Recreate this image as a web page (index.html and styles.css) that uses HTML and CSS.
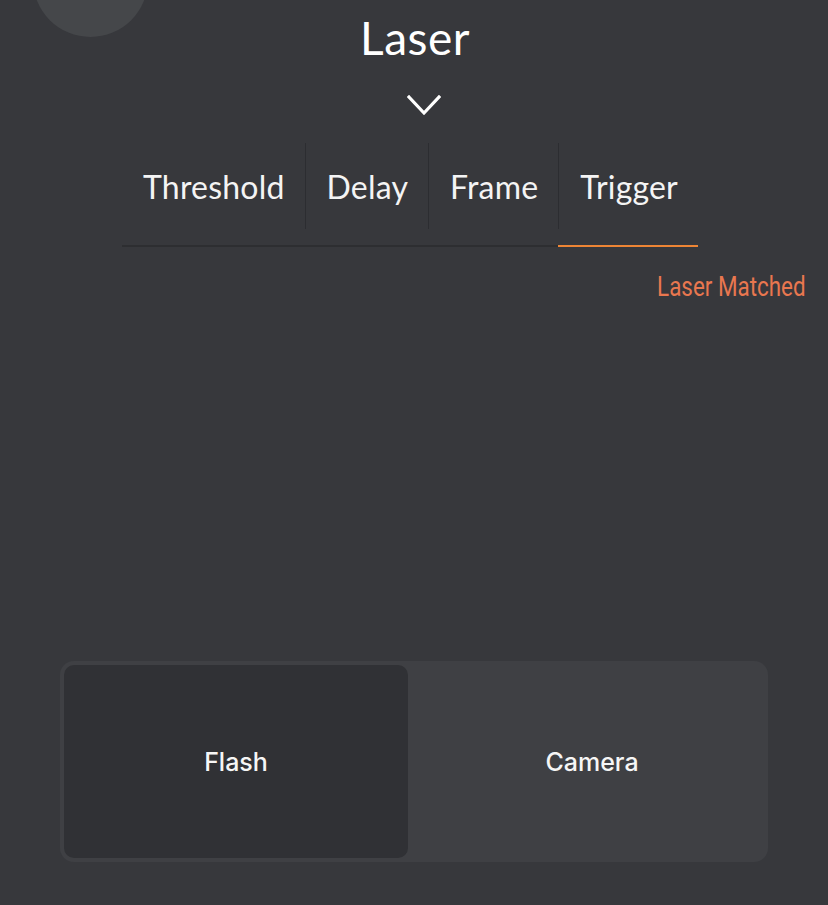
FILE: index.html
```html
<!DOCTYPE html>
<html>
<head>
<meta charset="utf-8">
<link rel="stylesheet" href="styles.css">
</head>
<body>
<div class="screen">
  <div class="avatar"></div>
  <header class="header">
    <h1 class="title">Laser</h1>
    <svg class="chevron" width="34" height="22" viewBox="0 0 34 22"><path d="M2 2 L17 18 L32 2" fill="none" stroke="#fff" stroke-width="3.2" stroke-linecap="square" stroke-linejoin="miter"/></svg>
  </header>
  <nav class="tabs">
    <div class="tab"><span class="tab-label">Threshold</span></div>
    <div class="tab"><span class="tab-label sep">Delay</span></div>
    <div class="tab"><span class="tab-label sep">Frame</span></div>
    <div class="tab active"><span class="tab-label sep">Trigger</span></div>
  </nav>
  <div class="status">Laser Matched</div>
  <div class="spacer"></div>
  <div class="segmented">
    <div class="segment selected">Flash</div>
    <div class="segment">Camera</div>
  </div>
</div>
</body>
</html>
```

FILE: styles.css
```css
html, body {
  margin: 0;
  padding: 0;
  background: #37383c;
}
.screen {
  position: relative;
  width: 828px;
  height: 905px;
  overflow: hidden;
  display: flex;
  flex-direction: column;
  font-family: Lato, "Noto Sans", sans-serif;
  color: #ffffff;
}
.avatar {
  position: absolute;
  left: 33px;
  top: -78px;
  width: 115px;
  height: 115px;
  border-radius: 50%;
  background: #45474a;
}
.header {
  display: flex;
  flex-direction: column;
  align-items: center;
  padding-top: 10px;
}
.title {
  margin: 0;
  font-size: 46px;
  font-weight: 400;
  line-height: 56px;
  letter-spacing: 0.5px;
  padding-left: 2px;
}
.chevron {
  display: block;
  margin-top: 29px;
  margin-left: 20px;
}
.tabs {
  align-self: center;
  display: flex;
  margin-top: 26px;
  margin-left: -8px;
  border-bottom: 2px solid #2d2e31;
}
.tab {
  display: flex;
  padding-bottom: 16px;
  margin-bottom: -2px;
  border-bottom: 2px solid transparent;
}
.tab.active {
  border-bottom-color: #ee8535;
}
.tab-label {
  display: flex;
  align-items: center;
  height: 86px;
  padding: 0 20px 0 21px;
  font-size: 32px;
  letter-spacing: 0.2px;
  color: #f4f4f4;
}
.tab-label.sep {
  border-left: 1px solid #2c2d31;
}
.status {
  align-self: flex-end;
  margin-top: 23px;
  margin-right: 22px;
  font-family: Roboto, "Liberation Sans", sans-serif;
  font-size: 28px;
  line-height: 34px;
  color: #e9774f;
  transform: scaleX(0.8);
  transform-origin: right center;
}
.spacer {
  flex: 1;
}
.segmented {
  align-self: center;
  margin-bottom: 43px;
  width: 700px;
  height: 193px;
  padding: 4px;
  border-radius: 14px;
  background: #3f4044;
  display: grid;
  grid-template-columns: 1fr 1fr;
  column-gap: 12px;
}
.segment {
  display: flex;
  align-items: center;
  justify-content: center;
  border-radius: 10px;
  font-family: Inter, "Noto Sans", sans-serif;
  font-size: 25px;
  font-weight: 500;
  color: #f6f6f6;
}
.segment.selected {
  background: #303135;
}
```
